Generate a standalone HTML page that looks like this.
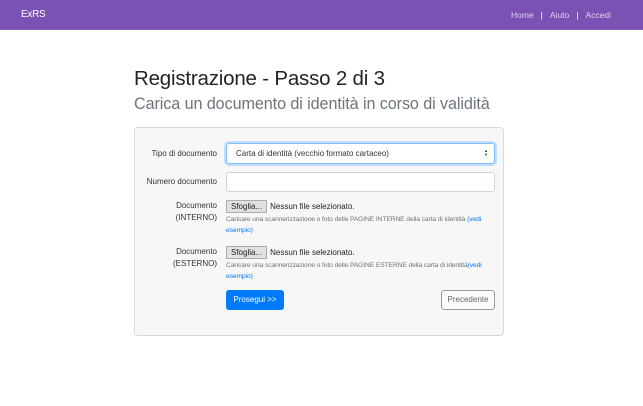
<!DOCTYPE html>
<html><head><meta charset="utf-8"><style>
*{box-sizing:border-box;margin:0;padding:0}
body{width:643px;height:406px;background:#fff;font-family:"Liberation Sans",sans-serif;position:relative;overflow:hidden;color:#212529}
.nav{position:absolute;left:0;top:0;width:643px;height:30px;background:#7952b3;border-bottom:1px solid #8a68bd}
.nav .b{position:absolute;left:21px;top:9px;color:#fff;font-size:10px;letter-spacing:-0.3px}
.nav .l{position:absolute;right:32px;top:10px;color:#ddd3ee;font-size:8.5px}
.nav .l span{margin:0 7px;color:#fff}
.a{position:absolute}
h1{position:absolute;left:134px;top:67px;font-size:20.5px;font-weight:400;color:#212529;letter-spacing:-0.2px}
h2{position:absolute;left:134px;top:95px;font-size:16.2px;font-weight:300;color:#6c757d;letter-spacing:-0.1px}
.card{position:absolute;left:134px;top:127px;width:370px;height:209px;background:#f7f7f7;border:1px solid #d9d9d9;border-radius:4px}
.lbl{position:absolute;right:426px;text-align:right;font-size:8px;color:#333;line-height:12px}
.in{position:absolute;left:226px;width:269px;background:#fff;border:1px solid #ced4da;border-radius:3px}
.file{position:absolute;left:226px;font-size:8px;color:#222}
.file i{font-style:normal;display:inline-block;background:#e1e1e1;border:1px solid #adadad;padding:1px 4px;margin-right:3px}
.help{position:absolute;left:226px;width:272px;font-size:6.7px;color:#6c757d;line-height:11px;letter-spacing:-0.1px}
.help a{color:#007bff}
</style></head><body>
<div class="nav"><div class="b">ExRS</div><div class="l">Home<span>|</span>Aiuto<span>|</span>Accedi</div></div>
<h1>Registrazione - Passo 2 di 3</h1>
<h2>Carica un documento di identità in corso di validità</h2>
<div class="card"></div>
<div class="lbl" style="top:148px">Tipo di documento</div>
<div class="in" style="top:143px;height:21px;border-color:#80bdff;box-shadow:0 0 0 2px rgba(0,123,255,.2);font-size:8px;padding:5px 9px;color:#333">Carta di identità (vecchio formato cartaceo)<span style="position:absolute;right:6px;top:5px;font-size:4px;line-height:4px">&#9650;<br>&#9660;</span></div>
<div class="lbl" style="top:176px">Numero documento</div>
<div class="in" style="top:172px;height:20px"></div>
<div class="lbl" style="top:200px">Documento<br>(INTERNO)</div>
<div class="file" style="top:200px"><i>Sfoglia...</i>Nessun file selezionato.</div>
<div class="help" style="top:214px">Caricare una scannerizzazione o foto delle PAGINE INTERNE della carta di identità <a>(vedi esempio)</a></div>
<div class="lbl" style="top:246px">Documento<br>(ESTERNO)</div>
<div class="file" style="top:246px"><i>Sfoglia...</i>Nessun file selezionato.</div>
<div class="help" style="top:260px">Caricare una scannerizzazione o foto delle PAGINE ESTERNE della carta di identità<a>(vedi esempio)</a></div>
<div class="a" style="left:226px;top:290px;width:58px;height:20px;background:#007bff;border-radius:3px;color:#fff;font-size:8px;text-align:center;line-height:20px">Prosegui &gt;&gt;</div>
<div class="a" style="left:441px;top:290px;width:54px;height:20px;border:1px solid #999;border-radius:3px;color:#666;font-size:8px;text-align:center;line-height:18px;background:#fafafa">Precedente</div>
</body></html>
